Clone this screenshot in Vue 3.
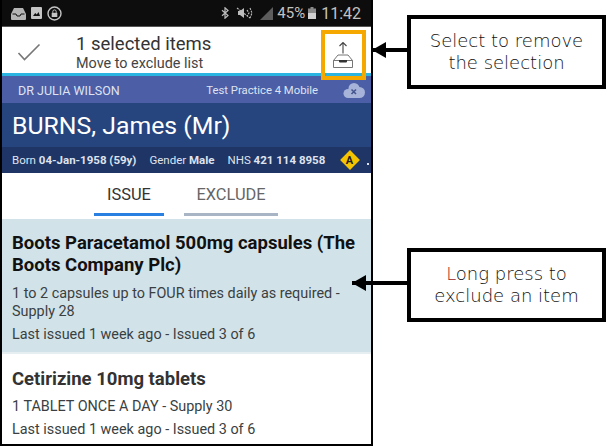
<template>
  <div class="page">
    <div class="phone">
      <div class="status-bar">
        <div class="status-left">
          <svg width="15" height="13" viewBox="0 0 15 13"><path d="M3 1h9l3 6v5a1 1 0 0 1-1 1H1a1 1 0 0 1-1-1V7z" fill="#b5b5b5"/><path d="M1.500 7h3.500l1 2h3l1-2h3.500" fill="none" stroke="#111" stroke-width="1"/></svg>
          <svg width="11" height="12" viewBox="0 0 11 12"><rect width="11" height="12" rx="1" fill="#c4c4c4"/><path d="M2 9l2.200-3 1.600 1.600L7.500 5 9 9z" fill="#111"/></svg>
          <svg width="15" height="15" viewBox="0 0 15 15"><circle cx="7.500" cy="7.500" r="6.500" fill="none" stroke="#c4c4c4" stroke-width="1.400"/><rect x="4.700" y="6.800" width="5.600" height="4.200" fill="#c4c4c4"/><path d="M5.800 6.800V5.600a1.700 1.700 0 0 1 3.400 0v1.200" fill="none" stroke="#c4c4c4"/></svg>
        </div>
        <div class="status-right">
          <svg width="9" height="12" viewBox="0 0 9 12"><path d="M1 3.300l6 5.200-3 2.700V.8l3 2.700-6 5.200" fill="none" stroke="#bdbdbd" stroke-width="1.200"/></svg>
          <svg class="mute" width="17" height="12" viewBox="0 0 17 12"><path d="M2 4h2l4-3v10L4 8H2z" fill="#bdbdbd"/><path d="M1 1l13 10M11 3l2 3-2 3M14 1l2 5-2 5" fill="none" stroke="#bdbdbd" stroke-width="1.100" stroke-dasharray="2 1"/></svg>
          <svg class="signal" width="13" height="13" viewBox="0 0 13 13"><path d="M13 0v13H0z" fill="#5d5d5d"/></svg>
          <span class="battery-text">45%</span>
          <svg width="8" height="12" viewBox="0 0 8 12"><rect x="2.500" width="3" height="2" fill="#8a8a8a"/><rect y="1.500" width="8" height="10.500" fill="#8a8a8a"/><rect y="6" width="8" height="6" fill="#d0d0d0"/></svg>
          <span class="clock">11:42</span>
        </div>
      </div>

      <div class="select-bar">
        <svg class="check" width="24" height="18" viewBox="0 0 24 18"><path d="M1.500 10l6 6.500L22.500 1.500" fill="none" stroke="#777" stroke-width="1.600"/></svg>
        <div class="select-text">
          <div class="select-count">1 selected items</div>
          <div class="select-action">Move to exclude list</div>
        </div>
        <div class="remove-btn">
          <svg width="20" height="26" viewBox="0 0 20 26">
            <path d="M10 0.500v11M6.500 4L10 .5 13.500 4" fill="none" stroke="#444" stroke-width="1.100"/>
            <path d="M5 13h10l4.500 5.500v7H.5v-7zM.5 18.500h5.500M14 18.500h5.500" fill="none" stroke="#666" stroke-width=".9"/>
            <path d="M6 18h8v1.500a1 1 0 0 1-1 1H7a1 1 0 0 1-1-1z" fill="#333"/>
          </svg>
        </div>
      </div>

      <div class="doctor-bar">
        <span class="doctor">DR JULIA WILSON</span>
        <div class="practice">
          <span>Test Practice 4 Mobile</span>
          <svg width="22" height="15" viewBox="0 0 22 15">
            <g fill="#a7b3d9">
              <circle cx="5" cy="10.500" r="4.500"/>
              <circle cx="11" cy="5.500" r="5.500"/>
              <circle cx="16.500" cy="9.500" r="5.500"/>
              <rect x="5" y="9" width="12" height="6"/>
            </g>
            <path d="M8.500 6.500l4.500 4.500M13 6.500L8.500 11" stroke="#45568f" stroke-width="1.600"/>
          </svg>
        </div>
      </div>

      <div class="patient-name">BURNS, James (Mr)</div>

      <div class="patient-details">
        <span>Born <b>04-Jan-1958 (59y)</b></span>
        <span>Gender <b>Male</b></span>
        <span>NHS <b>421 114 8958</b></span>
        <span class="alert"><i>A</i></span>
        <span class="dot"></span>
      </div>

      <div class="tabs">
        <div v-for="tab in tabs" :key="tab.name" class="tab" :class="{ active: tab.active }">{{ tab.name }}</div>
      </div>

      <div class="list">
        <div v-for="item in items" :key="item.name" class="item" :class="{ selected: item.selected }">
          <div class="item-name">{{ item.name }}</div>
          <div class="item-line">{{ item.dose }}</div>
          <div class="item-line issued">{{ item.issued }}</div>
        </div>
      </div>
    </div>

    <div class="callout callout-top">
      <div class="arrow"></div>
      <div class="callout-box">
        <div>Select to remove<br>the selection</div>
      </div>
    </div>
    <div class="callout callout-bottom">
      <div class="arrow"></div>
      <div class="callout-box">
        <div><span class="red">L</span>ong press to<br>exclude an item</div>
      </div>
    </div>
  </div>
</template>

<script setup>
const tabs = [
  { name: "ISSUE", active: true },
  { name: "EXCLUDE", active: false },
];

const items = [
  {
    name: "Boots Paracetamol 500mg capsules (The Boots Company Plc)",
    dose: "1 to 2 capsules up to FOUR times daily as required - Supply 28",
    issued: "Last issued 1 week ago - Issued 3 of 6",
    selected: true,
  },
  {
    name: "Cetirizine 10mg tablets",
    dose: "1 TABLET ONCE A DAY - Supply 30",
    issued: "Last issued 1 week ago - Issued 3 of 6",
    selected: false,
  },
];
</script>

<style>
html, body {
  margin: 0;
  background: #fff;
}
</style>

<style scoped>
.page {
  position: relative;
  width: 614px;
  height: 446px;
  overflow: hidden;
  background: #fff;
  font-family: Roboto, "Liberation Sans", sans-serif;
}

.phone {
  width: 373px;
  height: 446px;
  box-sizing: border-box;
  border: solid #000;
  border-width: 0 2px 2px 2px;
  overflow: hidden;
}

.status-bar {
  height: 26px;
  background: #0d0d0d;
  border-bottom: 1px solid #555;
  display: flex;
  justify-content: space-between;
  align-items: center;
  padding: 0 10px 0 9px;
}

.status-left,
.status-right {
  display: flex;
  align-items: center;
}

.status-left {
  gap: 5px;
}

.status-right {
  color: #c2c2c2;
  font-size: 15px;
}

.mute {
  margin-left: 6px;
}

.signal {
  margin-left: 7px;
}

.battery-text {
  margin: 0 3px 0 4px;
}

.clock {
  margin-left: 5px;
  font-size: 16px;
}

.select-bar {
  height: 46px;
  background: #fff;
  border-bottom: 3px solid #2ab4e2;
  display: flex;
  align-items: center;
  position: relative;
}

.check {
  margin: 4px 0 0 15px;
}

.select-text {
  margin-left: 35px;
  padding-top: 6px;
  color: #333;
}

.select-count {
  font-size: 18.500px;
  line-height: 21px;
}

.select-action {
  font-size: 14.400px;
  line-height: 17px;
  color: #444;
}

.remove-btn {
  position: absolute;
  left: 319px;
  top: 3px;
  width: 35px;
  height: 42px;
  border: 4px solid #f5a800;
  display: flex;
  align-items: center;
  justify-content: center;
  padding-right: 2px;
}

.doctor-bar {
  height: 26px;
  padding: 1px 6px 0 16px;
  background: #4b5ea6;
  color: #dfe3f2;
  font-size: 11.300px;
  display: flex;
  align-items: center;
  justify-content: space-between;
}

.doctor {
  font-size: 12.500px;
}

.practice {
  display: flex;
  align-items: center;
  gap: 25px;
}

.patient-name {
  height: 44px;
  background: #26457f;
  color: #fff;
  font-size: 24.800px;
  line-height: 46px;
  padding-left: 10px;
}

.patient-details {
  height: 26px;
  background: #1f3566;
  color: #dfe3ee;
  font-size: 11.500px;
  display: flex;
  align-items: center;
  padding-left: 10px;
  gap: 13px;
}

.alert {
  width: 14px;
  height: 14px;
  margin-left: 5px;
  background: #f5c400;
  transform: rotate(45deg);
  display: flex;
  align-items: center;
  justify-content: center;
}

.alert i {
  transform: rotate(-45deg);
  color: #222;
  font-style: normal;
  font-weight: 700;
  font-size: 11px;
}

.dot {
  width: 2px;
  height: 2px;
  background: #dfe3ee;
  margin: 8px 0 0 -3px;
}

.tabs {
  height: 46px;
  background: #fff;
  display: flex;
  padding-left: 92px;
  gap: 20px;
}

.tab {
  box-sizing: border-box;
  height: 43px;
  width: 70px;
  border-bottom: 3px solid #a9b4c4;
  color: #666;
  font-size: 16.400px;
  display: flex;
  align-items: center;
  justify-content: center;
  padding-top: 3px;
}

.tab.active {
  border-bottom-color: #2a80e0;
  color: #333;
}

.tab:last-child {
  width: 94px;
}

.item {
  padding: 14px 10px 0;
  color: #3a3f42;
}

.item.selected {
  background: #d1e3e9;
  height: 135px;
  padding-top: 13px;
  box-sizing: border-box;
  border-bottom: 2px solid #e6eef1;
}

.item-name {
  font-size: 18.500px;
  line-height: 22px;
  font-weight: 700;
  margin-bottom: 8px;
  color: #333;
}

.selected .item-name {
  color: #111;
  margin-bottom: 9px;
}

.item-line {
  font-size: 14.400px;
  line-height: 18px;
}

.issued {
  margin-top: 5px;
}

.callout {
  position: absolute;
  display: flex;
  align-items: center;
}

.callout-top {
  top: 15px;
  left: 372px;
}

.callout-bottom {
  top: 248px;
  left: 352px;
}

.arrow {
  position: relative;
  height: 4px;
  background: #000;
  margin-bottom: 4px;
}

.arrow::before {
  content: "";
  position: absolute;
  left: 0;
  top: -6px;
  border-style: solid;
  border-width: 8px 14px 8px 0;
  border-color: transparent #000 transparent transparent;
}

.callout-top .arrow {
  width: 35px;
}

.callout-bottom .arrow {
  width: 55px;
}

.callout-box {
  box-sizing: border-box;
  width: 199px;
  height: 74px;
  border: 4px solid #000;
  background: #fff;
  color: #111;
  font-family: "DejaVu Sans", sans-serif;
  font-weight: 200;
  font-size: 18px;
  line-height: 22px;
  text-align: center;
  display: flex;
  align-items: center;
  justify-content: center;
}

.red {
  color: #922;
}
</style>
